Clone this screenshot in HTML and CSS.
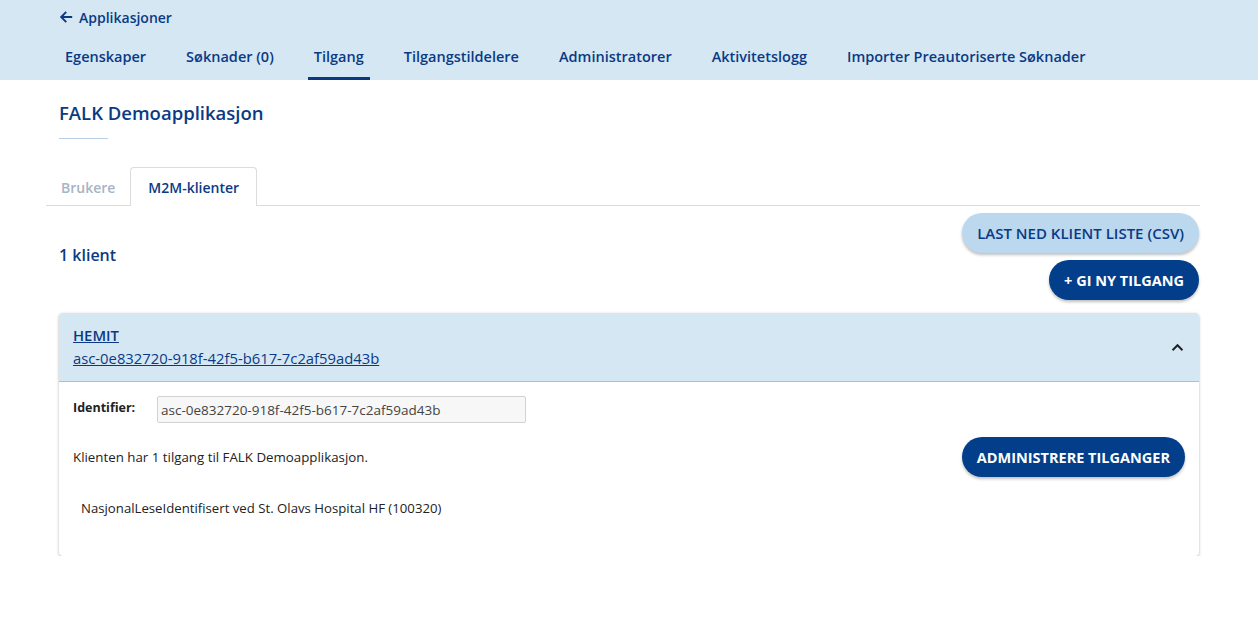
FILE: index.html
```html
<!DOCTYPE html>
<html lang="no">
<head>
<meta charset="utf-8">
<title>FALK Demoapplikasjon</title>
<link rel="stylesheet" href="styles.css">
</head>
<body>
<header class="topbar">
  <a class="back" href="#">
    <svg class="back-icon" viewBox="0 0 16 16" width="14" height="14"><path d="M14 8H3M7.5 3L2.5 8l5 5" fill="none" stroke="currentColor" stroke-width="2.2" stroke-linecap="square"/></svg>
    <span>Applikasjoner</span>
  </a>
  <nav class="nav">
    <a class="nav-item" href="#">Egenskaper</a>
    <a class="nav-item" href="#">Søknader (0)</a>
    <a class="nav-item active" href="#">Tilgang</a>
    <a class="nav-item" href="#">Tilgangstildelere</a>
    <a class="nav-item" href="#">Administratorer</a>
    <a class="nav-item" href="#">Aktivitetslogg</a>
    <a class="nav-item" href="#">Importer Preautoriserte Søknader</a>
  </nav>
</header>

<main class="main">
  <h1 class="title">FALK Demoapplikasjon</h1>
  <div class="title-rule"></div>

  <div class="tabs">
    <button class="tab">Brukere</button>
    <button class="tab active">M2M-klienter</button>
  </div>

  <div class="toolbar">
    <h2 class="count">1 klient</h2>
    <div class="actions">
      <button class="btn btn-light">LAST NED KLIENT LISTE (CSV)</button>
      <button class="btn btn-dark">+ GI NY TILGANG</button>
    </div>
  </div>

  <section class="card">
    <div class="card-head">
      <div class="card-titles">
        <a class="card-name" href="#">HEMIT</a>
        <a class="card-id" href="#">asc-0e832720-918f-42f5-b617-7c2af59ad43b</a>
      </div>
      <svg class="chev" viewBox="0 0 14 10" width="13" height="9"><path d="M1.5 8L7 2.5 12.5 8" fill="none" stroke="#222" stroke-width="2.2"/></svg>
    </div>
    <div class="card-body">
      <div class="field">
        <label class="field-label">Identifier:</label>
        <input class="field-input" type="text" value="asc-0e832720-918f-42f5-b617-7c2af59ad43b" readonly>
      </div>
      <div class="access-row">
        <p class="access-text">Klienten har 1 tilgang til FALK Demoapplikasjon.</p>
        <button class="btn btn-dark">ADMINISTRERE TILGANGER</button>
      </div>
      <p class="grant">NasjonalLeseIdentifisert ved St. Olavs Hospital HF (100320)</p>
    </div>
  </section>
</main>
</body>
</html>
```

FILE: styles.css
```css
* { box-sizing: border-box; }
html, body { margin: 0; padding: 0; }
body {
  font-family: "Open Sans", "Noto Sans", "Liberation Sans", sans-serif;
  color: #222;
  background: #fff;
  width: 1258px;
}
a { text-decoration: none; }

.topbar {
  background: #d6e7f4;
  height: 80px;
  padding: 0 0 0 59px;
  display: flex;
  flex-direction: column;
}
.back {
  display: flex;
  align-items: center;
  gap: 6px;
  color: #0a3a84;
  font-weight: 600;
  font-size: 14px;
  height: 34px;
}
.back-icon { color: #0a3a84; }
.nav {
  display: flex;
  gap: 28px;
  height: 46px;
}
.nav-item {
  display: flex;
  align-items: center;
  padding: 2px 6px 0;
  color: #0a3a84;
  font-weight: 600;
  font-size: 14.5px;
  border-bottom: 3px solid transparent;
}
.nav-item.active { border-bottom-color: #0a3a84; }

.main { padding: 0 59px; }
.title {
  margin: 0;
  padding-top: 20px;
  font-size: 18.5px;
  font-weight: 600;
  color: #0a3a84;
  line-height: 26px;
}
.title-rule {
  width: 49px;
  height: 1px;
  background: #b7cfe8;
  margin-top: 12px;
}

.tabs {
  margin: 28px -1px 0 -13px;
  display: flex;
  border-bottom: 1px solid #dcdcdc;
  height: 39px;
}
.tab {
  font-family: inherit;
  font-size: 14px;
  font-weight: 600;
  background: none;
  border: 1px solid transparent;
  border-bottom: none;
  color: #a8b4c4;
  padding: 0 14px;
  height: 39px;
  margin-bottom: -1px;
  border-radius: 4px 4px 0 0;
}
.tab.active {
  color: #0a3a84;
  border-color: #dcdcdc;
  background: #fff;
  padding: 0 17px;
}

.toolbar {
  display: flex;
  justify-content: space-between;
  align-items: center;
  margin-top: 7px;
}
.count {
  margin: 0 0 3px;
  font-size: 16px;
  font-weight: 600;
  color: #0a3a84;
}
.actions {
  display: flex;
  flex-direction: column;
  align-items: flex-end;
  gap: 7px;
}
.btn {
  font-family: inherit;
  font-weight: 700;
  font-size: 14.5px;
  border: none;
  border-radius: 20px;
  height: 40px;
  padding: 0 15px;
  box-shadow: 0 2px 3px rgba(0,0,0,0.25);
}
.btn-light { background: #bcd8ee; color: #0a3a84; font-weight: 600; font-size: 15px; }
.btn-dark { background: #023e8a; color: #fff; }

.card {
  margin-top: 13px;
  border-radius: 4px;
  box-shadow: 0 1px 3px rgba(0,0,0,0.3);
  overflow: hidden;
}
.card-head {
  background: #d6e7f4;
  border-bottom: 1px solid #aebfd0;
  height: 69px;
  padding: 0 15px 0 14px;
  display: flex;
  align-items: center;
  justify-content: space-between;
}
.card-titles { display: flex; flex-direction: column; gap: 2px; }
.card-name, .card-id {
  color: #0a3a84;
  text-decoration: underline;
  font-size: 14.8px;
  line-height: 21px;
}
.card-name { font-weight: 600; }
.card-body {
  padding: 14px 14px 39px;
}
.field { display: flex; align-items: center; }
.field-label {
  font-size: 12.5px;
  font-weight: 700;
  color: #222;
  width: 84px;
  margin-top: -5px;
}
.field-input {
  font-family: inherit;
  font-size: 13.5px;
  color: #444;
  width: 369px;
  height: 27px;
  padding: 0 3px;
  background: #f7f7f7;
  border: 1px solid #d2d2d2;
  border-radius: 2px;
}
.access-row {
  display: flex;
  justify-content: space-between;
  align-items: center;
  margin-top: 14px;
}
.access-text { margin: 0; font-size: 13.3px; }
.grant { margin: 22px 0 0 8px; font-size: 13.2px; }
```
